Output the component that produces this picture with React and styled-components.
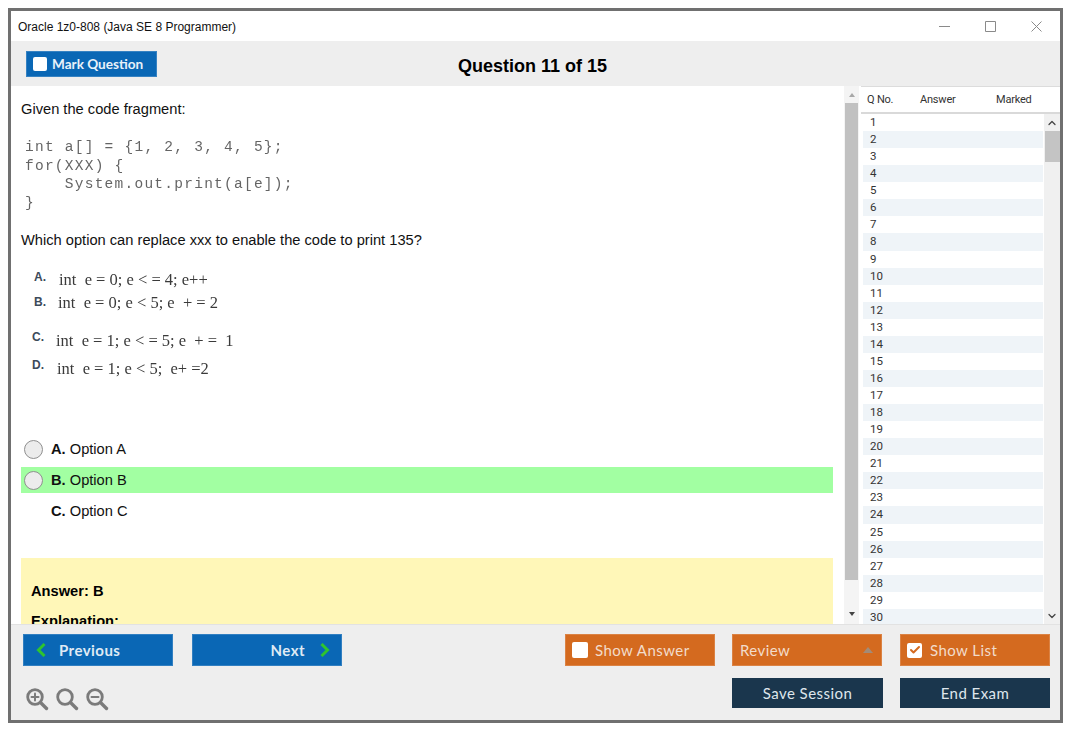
import React from "react";
import styled, { createGlobalStyle } from "styled-components";
import { ChevronUp, ChevronDown, Check } from "lucide-react";

const Global = createGlobalStyle`
  html, body { margin: 0; padding: 0; background: #fff; }
  body { width: 1075px; height: 735px; overflow: hidden; font-family: "Liberation Sans", Arial, sans-serif; }
`;

const Page = styled.div`
  padding: 8px 0 0 8px;
`;
const Window = styled.div`
  width: 1055px;
  height: 715px;
  box-sizing: border-box;
  border: 3px solid #707070;
  display: flex;
  flex-direction: column;
  background: #fff;
  overflow: hidden;
`;
const TitleBar = styled.div`
  height: 30px;
  flex: none;
  box-sizing: border-box;
  padding: 2px 0 0 7px;
  display: flex;
  align-items: center;
  justify-content: space-between;
  font-size: 12px;
  color: #111;
`;
const WinControls = styled.div`
  display: flex;
  align-items: center;
  gap: 35px;
  padding-right: 18px;
  margin-top: -2px;
  & svg { display: block; }
`;
const Toolbar = styled.div`
  height: 45px;
  flex: none;
  background: #eeeeee;
  display: flex;
  align-items: flex-start;
  position: relative;
`;
const MarkButton = styled.div`
  margin: 10px 0 0 15px;
  width: 131px;
  height: 26px;
  box-sizing: border-box;
  padding-left: 7px;
  background: #0a67b5;
  box-shadow: inset 0 0 0 1px rgba(255, 255, 255, .18);
  display: flex;
  align-items: center;
  gap: 5px;
  color: #e8f1f9;
  font: 700 13.6px "Lato", sans-serif;
`;
const WhiteBox = styled.span`
  width: ${(p) => p.$s || 14}px;
  height: ${(p) => p.$s || 14}px;
  border-radius: 2px;
  background: #fff;
  flex: none;
  display: flex;
  align-items: center;
  justify-content: center;
`;
const QuestionTitle = styled.div`
  position: absolute;
  left: 447px;
  top: 15px;
  font-size: 18px;
  font-weight: 700;
  color: #000;
`;
const Main = styled.div`
  flex: 1;
  min-height: 0;
  display: flex;
`;
const ContentPane = styled.div`
  width: 850px;
  flex: none;
  display: flex;
  overflow: hidden;
`;
const Content = styled.div`
  width: 812px;
  flex: none;
  padding: 13px 0 0 10px;
  font-size: 14.67px;
  color: #111;
`;
const Para = styled.div`
  height: 20px;
  line-height: 20px;
  margin-bottom: ${(p) => p.$after || 0}px;
`;
const Code = styled.pre`
  margin: 0 0 17px 4px;
  font: 14.5px/18.6px "Liberation Mono", monospace;
  letter-spacing: 1.25px;
  color: #4a4a4a;
  height: 75px;
  opacity: .85;
  filter: blur(.3px);
`;
const OptionImage = styled.div`
  height: 168px;
  padding-left: 13px;
  display: flex;
  flex-direction: column;
`;
const OptionLine = styled.div`
  display: flex;
  align-items: center;
  height: ${(p) => p.$h || 24}px;
  margin-top: ${(p) => p.$top || 0}px;
  margin-left: ${(p) => p.$left || 0}px;
`;
const OptLetter = styled.span`
  font-size: 12px;
  font-weight: 700;
  color: #3c4a5a;
  width: ${(p) => p.$w || 25}px;
  position: relative;
  top: ${(p) => p.$lift || 0}px;
`;
const OptCode = styled.span`
  font: 16.5px "Liberation Serif", serif;
  white-space: pre;
  color: #3a3a3a;
  filter: blur(.25px);
`;
const Choice = styled.div`
  height: 26px;
  display: flex;
  align-items: center;
  gap: 8px;
  margin-bottom: 5px;
  background: ${(p) => (p.$hit ? "#a2ffa2" : "transparent")};
  color: #111;
  padding-left: ${(p) => (p.$noRadio ? 30 : 3)}px;
  & b { font-weight: 700; }
`;
const Radio = styled.span`
  width: 17px;
  height: 17px;
  border-radius: 50%;
  border: 1px solid #8f8f8f;
  background: #ececec;
  flex: none;
`;
const AnswerBox = styled.div`
  margin-top: 34px;
  height: 120px;
  background: #fff7b8;
  padding: 24px 0 0 10px;
  font-weight: 700;
  color: #000;
`;
const AnswerLine = styled.div`
  height: 18px;
  line-height: 18px;
  margin-bottom: 12px;
`;
const ContentScroll = styled.div`
  width: 15px;
  margin-left: 11px;
  flex: none;
  background: #f4f4f4;
  display: flex;
  flex-direction: column;
  align-items: center;
`;
const ArrowUp = styled.div`
  height: 17px;
  flex: none;
  display: flex;
  align-items: center;
  &::before {
    content: "";
    border: 3.5px solid transparent;
    border-top: 0;
    border-bottom: 4px solid #a8a8a8;
  }
`;
const ArrowDown = styled.div`
  margin-top: auto;
  height: 20px;
  display: flex;
  align-items: center;
  &::before {
    content: "";
    border: 3.5px solid transparent;
    border-bottom: 0;
    border-top: 4px solid #444;
  }
`;
const ContentThumb = styled.div`
  width: 13px;
  height: 477px;
  flex: none;
  background: #c1c1c1;
`;
const ListPane = styled.div`
  flex: 1;
  min-width: 0;
  display: flex;
  flex-direction: column;
  background: #fff;
  border-top: 1px solid #dcdcdc;
`;
const ListHeader = styled.div`
  height: 27px;
  flex: none;
  box-sizing: border-box;
  border-bottom: 2px solid #d9d9d9;
  display: grid;
  grid-template-columns: 53px 76px 1fr;
  align-items: center;
  font: 11px "Roboto", sans-serif;
  letter-spacing: -.2px;
  color: #333;
  padding-left: 6px;
`;
const ListBody = styled.div`
  flex: 1;
  min-height: 0;
  display: flex;
  overflow: hidden;
`;
const Rows = styled.div`
  width: 180px;
  margin-left: 2px;
  flex: none;
`;
const Row = styled.div`
  height: 17.07px;
  padding-left: 7px;
  font: 11.5px/17px "Roboto", sans-serif;
  color: #333;
  background: ${(p) => (p.$alt ? "#eff4f8" : "#fff")};
`;
const ListScroll = styled.div`
  width: 16px;
  margin-left: 1px;
  flex: none;
  background: #f0f0f0;
  display: flex;
  flex-direction: column;
  align-items: center;
  color: #444;
`;
const ScrollCap = styled.div`
  height: 17px;
  flex: none;
  display: flex;
  align-items: center;
  margin-top: ${(p) => (p.$end ? "auto" : 0)};
`;
const ListThumb = styled.div`
  width: 15px;
  height: 31px;
  flex: none;
  background: #c4c4c4;
`;
const Footer = styled.div`
  height: 96px;
  flex: none;
  box-sizing: border-box;
  background: #eeeeee;
  border-top: 1px solid #e2e2e2;
  padding: 9px 10px 0 12px;
  display: grid;
  grid-template-columns: 319px 1fr 150px 150px;
  grid-template-rows: 32px 30px;
  column-gap: 18px;
  row-gap: 12px;
`;
const NavGroup = styled.div`
  display: flex;
  gap: 19px;
`;
const ActionButton = styled.div`
  box-sizing: border-box;
  width: ${(p) => p.$w || 150}px;
  height: 100%;
  flex: none;
  background: ${(p) => p.$bg};
  color: ${(p) => p.$fg || "#f2dccb"};
  box-shadow: ${(p) => (p.$flat ? "none" : "inset 0 0 0 1px rgba(255, 255, 255, .16)")};
  display: flex;
  align-items: center;
  justify-content: ${(p) => p.$justify || "flex-start"};
  gap: ${(p) => p.$gap || 7}px;
  padding: 0 ${(p) => p.$pr || 8}px 0 ${(p) => p.$pl || 8}px;
  font: ${(p) => p.$weight || 400} 15px "Lato", sans-serif;
  letter-spacing: .45px;
  & svg { flex: none; }
`;
const Cell = styled.div`
  grid-column: ${(p) => p.$col};
  grid-row: ${(p) => p.$row};
  display: flex;
  justify-content: ${(p) => p.$justify || "flex-start"};
  margin-right: ${(p) => p.$mr || 0}px;
`;
const Zooms = styled.div`
  grid-column: 1;
  grid-row: 2;
  display: flex;
  gap: 6px;
  padding: 9px 0 0 2px;
`;
const Triangle = styled.span`
  margin-left: auto;
  margin-right: 1px;
  border: 5px solid transparent;
  border-top: 0;
  border-bottom: 6px solid #a38b78;
`;

const ZoomIcon = ({ kind }) => (
  <svg width="24" height="24" viewBox="0 0 24 24" fill="none" stroke="#7b7b7b" strokeWidth="2.8" strokeLinecap="round">
    <circle cx="10" cy="10" r="7.3" />
    <path d="M15.5 15.5L21.5 21.5" strokeWidth="3.4" />
    {kind !== "reset" && <path d="M6.5 10H13.5" strokeWidth="2" />}
    {kind === "plus" && <path d="M10 6.5V13.5" strokeWidth="2" />}
  </svg>
);

const Chevron = ({ dir }) => (
  <svg width="10" height="14" viewBox="0 0 10 14" fill="none" stroke="#2fc42f" strokeWidth="3">
    <path d={dir === "left" ? "M8.5 1L2.5 7L8.5 13" : "M1.5 1L7.5 7L1.5 13"} />
  </svg>
);

const WinIcon = ({ d, h = 11, w = 11 }) => (
  <svg width={w} height={h} viewBox={`0 0 ${w} ${h}`} fill="none" stroke="#8a8a8a" strokeWidth="1">
    <path d={d} />
  </svg>
);

const rows = Array.from({ length: 30 }, (_, i) => i + 1);

export default function App() {
  return (
    <Page>
      <Global />
      <Window>
        <TitleBar>
          Oracle 1z0-808 (Java SE 8 Programmer)
          <WinControls>
            <WinIcon d="M0 5.5H11" />
            <WinIcon d="M.5 .5H10.5V10.5H.5Z" />
            <WinIcon d="M.5 .5L10.5 10.5M10.5 .5L.5 10.5" />
          </WinControls>
        </TitleBar>
        <Toolbar>
          <MarkButton><WhiteBox />Mark Question</MarkButton>
          <QuestionTitle>Question 11 of 15</QuestionTitle>
        </Toolbar>
        <Main>
          <ContentPane>
            <Content>
              <Para $after={19}>Given the code fragment:</Para>
              <Code>{"int a[] = {1, 2, 3, 4, 5};\nfor(XXX) {\n    System.out.print(a[e]);\n}"}</Code>
              <Para $after={18}>Which option can replace xxx to enable the code to print 135?</Para>
              <OptionImage>
                <OptionLine $h={23}><OptLetter $w={25} $lift={-3}>A.</OptLetter><OptCode>int  e = 0; e &lt; = 4; e++</OptCode></OptionLine>
                <OptionLine><OptLetter $w={24} $lift={-1}>B.</OptLetter><OptCode>int  e = 0; e &lt; 5; e  + = 2</OptCode></OptionLine>
                <OptionLine $top={14} $left={-2}><OptLetter $w={24} $lift={-4}>C.</OptLetter><OptCode>int  e = 1; e &lt; = 5; e  + =  1</OptCode></OptionLine>
                <OptionLine $top={4} $left={-2}><OptLetter $w={25} $lift={-4}>D.</OptLetter><OptCode>int  e = 1; e &lt; 5;  e+ =2</OptCode></OptionLine>
              </OptionImage>
              <Choice><Radio /><span><b>A.</b> Option A</span></Choice>
              <Choice $hit><Radio /><span><b>B.</b> Option B</span></Choice>
              <Choice $noRadio><span><b>C.</b> Option C</span></Choice>
              <AnswerBox>
                <AnswerLine>Answer: B</AnswerLine>
                <AnswerLine>Explanation:</AnswerLine>
              </AnswerBox>
            </Content>
            <ContentScroll>
              <ArrowUp />
              <ContentThumb />
              <ArrowDown />
            </ContentScroll>
          </ContentPane>
          <ListPane>
            <ListHeader><span>Q No.</span><span>Answer</span><span>Marked</span></ListHeader>
            <ListBody>
              <Rows>{rows.map((n) => <Row key={n} $alt={n % 2 === 0}>{n}</Row>)}</Rows>
              <ListScroll>
                <ScrollCap><ChevronUp size={12} strokeWidth={2.5} /></ScrollCap>
                <ListThumb />
                <ScrollCap $end><ChevronDown size={12} strokeWidth={2.5} /></ScrollCap>
              </ListScroll>
            </ListBody>
          </ListPane>
        </Main>
        <Footer>
          <NavGroup>
            <ActionButton $bg="#0a67b5" $fg="#dfeaf4" $weight={700} $gap={13} $pl={13}>
              <Chevron dir="left" />Previous
            </ActionButton>
            <ActionButton $bg="#0a67b5" $fg="#dfeaf4" $weight={700} $justify="flex-end" $gap={15} $pr={12}>
              Next<Chevron dir="right" />
            </ActionButton>
          </NavGroup>
          <Cell $col={2} $row={1} $justify="flex-end" $mr={-1}>
            <ActionButton $bg="#d46a1f" $pl={7} $gap={7}><WhiteBox $s={16} />Show Answer</ActionButton>
          </Cell>
          <Cell $col={3} $row={1}>
            <ActionButton $bg="#d46a1f">Review<Triangle /></ActionButton>
          </Cell>
          <Cell $col={4} $row={1}>
            <ActionButton $bg="#d46a1f" $pl={7} $gap={8}>
              <WhiteBox $s={15}><Check size={12} color="#d46a1f" strokeWidth={4} /></WhiteBox>Show List
            </ActionButton>
          </Cell>
          <Zooms>
            <ZoomIcon kind="plus" /><ZoomIcon kind="reset" /><ZoomIcon kind="minus" />
          </Zooms>
          <Cell $col={3} $row={2}>
            <ActionButton $bg="#1a364d" $fg="#dfe6ec" $justify="center" $w={151} $flat>Save Session</ActionButton>
          </Cell>
          <Cell $col={4} $row={2}>
            <ActionButton $bg="#1a364d" $fg="#dfe6ec" $justify="center" $flat>End Exam</ActionButton>
          </Cell>
        </Footer>
      </Window>
    </Page>
  );
}
